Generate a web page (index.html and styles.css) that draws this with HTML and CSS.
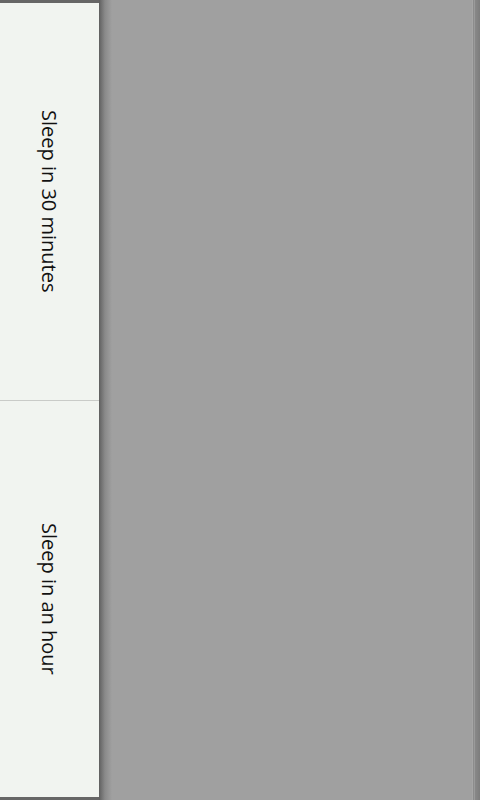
FILE: index.html
```html
<!DOCTYPE html>
<html>
<head>
<meta charset="utf-8">
<link rel="stylesheet" href="styles.css">
</head>
<body>
<div class="screen">
  <div class="frame">
    <div class="panel">
      <div class="option"><span class="label">Sleep in 30 minutes</span></div>
      <div class="divider"></div>
      <div class="option"><span class="label">Sleep in an hour</span></div>
    </div>
  </div>
  <div class="shadow"></div>
  <div class="main"></div>
  <div class="edge"></div>
</div>
</body>
</html>
```
FILE: styles.css
```css
html, body {
  margin: 0;
  padding: 0;
  width: 480px;
  height: 800px;
  overflow: hidden;
  background: #a0a0a0;
  font-family: "Open Sans", "DejaVu Sans", sans-serif;
}
.screen {
  display: flex;
  width: 480px;
  height: 800px;
}
.frame {
  width: 99px;
  flex: none;
  background: #666666;
  padding: 3px 0;
  box-sizing: border-box;
  display: flex;
}
.panel {
  flex: 1;
  display: flex;
  flex-direction: column;
  background: #f1f4f0;
}
.option {
  flex: 1;
  display: flex;
  align-items: center;
  justify-content: center;
}
.divider {
  height: 1px;
  background: #c9cbc8;
  flex: none;
}
.label {
  writing-mode: vertical-rl;
  font-size: 20px;
  color: #111111;
  white-space: nowrap;
}
.shadow {
  width: 13px;
  flex: none;
  background: linear-gradient(to right, #5e5e5e 0, #6e6e6e 2px, #8a8a8a 6px, #a0a0a0 13px);
}
.main {
  flex: 1;
  background: #a0a0a0;
}
.edge {
  width: 8px;
  flex: none;
  background: linear-gradient(to right, #a6a6a6 0, #a6a6a6 1px, #8c8c8c 1px, #8c8c8c 2px, #9a9a9a 2px, #9a9a9a 3px, #888888 3px, #848484 5px, #7c7c7c 8px);
}
```
